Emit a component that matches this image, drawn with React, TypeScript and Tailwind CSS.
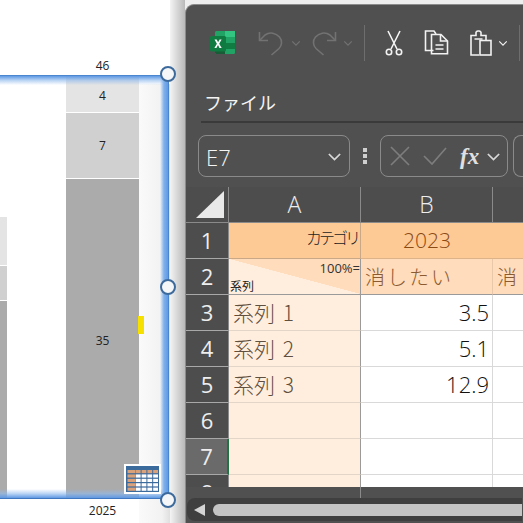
const jp = "font-['Noto_Sans_CJK_JP','Noto_Sans',sans-serif]";
const ui = "font-['Open_Sans','Noto_Sans_CJK_JP',sans-serif]";

const Chevron = ({ color = "#d8d8d8", w = 12 }: { color?: string; w?: number }) => (
  <svg width={w} height={w} viewBox="0 0 12 12" fill="none" stroke={color} strokeWidth="1.4">
    <path d="M1.5 4 6 8.5 10.5 4" />
  </svg>
);

const ExcelLogo = () => (
  <svg width="25" height="25" viewBox="0 0 25 25" className="shrink-0">
    <rect x="5" y="1" width="20" height="23" rx="1.5" fill="#21a366" />
    <rect x="15" y="1" width="10" height="6" fill="#33c481" />
    <rect x="15" y="7" width="10" height="6" fill="#21a366" />
    <rect x="15" y="13" width="10" height="6" fill="#107c41" />
    <path d="M5 13h10v11H6.500A1.500 1.500 0 0 1 5 22.500z" fill="#185c37" />
    <rect x="0" y="6" width="16" height="15.500" rx="1.500" fill="#0f7b41" />
    <path d="M4.500 9.500h2.200l1.400 2.700 1.500-2.700h2l-2.400 4.200 2.500 4.300h-2.200l-1.500-2.900-1.600 2.900h-2l2.500-4.300z" fill="#fff" />
  </svg>
);

const Undo = ({ flip }: { flip?: boolean }) => (
  <svg width="25" height="26" viewBox="0 0 25 26" fill="none" stroke="#727272" strokeWidth="1.6" className={flip ? "-scale-x-100" : ""}>
    <path d="M1.500 2v8.500H10" />
    <path d="M1.500 10.500 7 5c5-3.500 11-2 14.500 2 3 3.500 2.500 8.500-.5 11.500L13.500 25" />
  </svg>
);

const Scissors = () => (
  <svg width="18" height="26" viewBox="0 0 18 26" fill="none" stroke="#f2f2f2" strokeWidth="1.6">
    <path d="M3 1 12 19M15 1 6 19" />
    <circle cx="4" cy="22" r="2.700" />
    <circle cx="14" cy="22" r="2.700" />
  </svg>
);

const Copy = () => (
  <svg width="25" height="25" viewBox="0 0 25 25" fill="none" stroke="#f2f2f2" strokeWidth="1.6">
    <path d="M9.500 20.500H1.500V1h8.500l2 3" />
    <path d="M7.500 4.500h9.500l6.500 6.500v12.800h-16z" />
    <path d="M16.500 5v6h7M11.500 15h8M11.500 19h8" />
  </svg>
);

const Paste = () => (
  <svg width="22" height="26" viewBox="0 0 22 26" fill="none" stroke="#f2f2f2" strokeWidth="1.600">
    <path d="M9 25H1V5.500h5V3.500A2 2 0 0 1 8 1h1a2 2 0 0 1 2 2.500v2h5V10" />
    <rect x="10" y="10.500" width="11" height="14.500" />
    <path d="M4.500 9h8" />
  </svg>
);

const TableBadge = () => (
  <svg width="37" height="30" viewBox="0 0 37 30">
    <rect width="37" height="30" fill="#fff" />
    <rect x="2" y="2" width="33" height="26" fill="#3b6a9c" />
    {[0, 1, 2, 3, 4].map((c) =>
      [0, 1, 2, 3, 4].map((r) => (
        <rect
          key={`${c}-${r}`}
          x={c === 0 ? 3.500 : 6 + c * 5.800}
          y={6 + r * 4.400}
          width={c === 0 ? 8 : 4.800}
          height="3.200"
          fill={r === 0 || c === 0 ? "#d9a27a" : "#ffffff"}
        />
      )),
    )}
  </svg>
);

const Handle = ({ y }: { y: number }) => (
  <div
    className="absolute left-[160px] size-4 rounded-full border-2 border-[#3d6a9c] bg-[#f4f6f8]"
    style={{ top: y - 8 }}
  />
);

const Chart = () => (
  <div className="relative w-[185px] h-full shrink-0 overflow-hidden bg-white">
    {/* window shadow on the right */}
    <div className="absolute left-[139px] top-[84px] bottom-0 w-[46px] bg-gradient-to-r from-[#fafafa] via-[#f2f2f2] to-[#bdbdbd]" />
    <div className="absolute left-[170px] top-0 bottom-0 w-[15px] bg-gradient-to-r from-[#f4f4f4] to-[#b9b9b9]" />

    {/* left bar, cut by the edge */}
    <div className="absolute left-0 top-[217px] bottom-[25px] w-[7px] flex flex-col gap-px">
      <div className="h-[48px] bg-[#e4e4e4]" />
      <div className="h-[34px] bg-[#d0d0d0]" />
      <div className="flex-1 bg-[#ababab]" />
    </div>

    {/* 2025 bar */}
    <div className={`absolute left-[66px] top-[76px] bottom-[25px] w-[73px] flex flex-col gap-px text-[12px] text-[#222] ${ui}`}>
      <div className="h-[36px] pt-[3px] flex items-center justify-center bg-[#e4e4e4]">4</div>
      <div className="h-[65px] flex items-center justify-center bg-[#d0d0d0]">7</div>
      <div className="flex-1 pt-[5px] flex items-center justify-center bg-[#ababab]">35</div>
    </div>
    <div className={`absolute left-[66px] top-[58px] w-[73px] text-center text-[12px] leading-[15px] text-[#222] ${ui}`}>46</div>
    <div className={`absolute left-[66px] top-[503px] w-[73px] text-center text-[12px] leading-[15px] text-[#222] ${ui}`}>2025</div>

    {/* selection frame */}
    <div className="absolute left-0 top-[75px] w-[168px] h-[10px] border-t border-[#4a85d0] bg-gradient-to-b from-[#5f9ae4] via-[#8fb9ee99] to-[#639ce200]" />
    <div className="absolute left-0 top-[489px] w-[168px] h-[10px] border-b border-[#3f78c0] bg-gradient-to-t from-[#5f9ae4] via-[#8fb9ee99] to-[#639ce200]" />
    <div className="absolute left-[160px] top-[75px] w-[9px] h-[424px] border-r border-[#4a85d0] bg-gradient-to-r from-[#639ce200] via-[#7fb0ec] to-[#5f9ae4]" />

    <Handle y={74} />
    <Handle y={287} />
    <Handle y={500} />

    <div className="absolute left-[138px] top-[316px] w-[6px] h-[18px] bg-[#f6e000]" />
    <div className="absolute left-[124px] top-[464px]">
      <TableBadge />
    </div>
  </div>
);

const rowNums = [1, 2, 3, 4, 5, 6, 7, 8];

const Cell = ({ className = "", children }: { className?: string; children?: React.ReactNode }) => (
  <div className={`h-[36px] min-w-0 overflow-hidden whitespace-nowrap ${className}`}>{children}</div>
);

const peach = "bg-[#ffeedd] border-b border-[#e3d6c8] border-r border-r-[#9a9a9a]";
const white = "bg-white border-b border-r border-[#d9d9d9]";
const label = `flex items-center pl-[4px] text-[21px] [word-spacing:3px] text-[#5f4f3e] font-light ${jp}`;
const num = `flex items-center justify-end pr-[3px] text-[22px] text-[#111] font-light ${ui}`;

const Sheet = () => (
  <div className={`relative h-[300px] shrink-0 overflow-hidden grid grid-cols-[43px_132px_132px_1fr] auto-rows-[36px] content-start bg-[#4d4d4d] ${ui}`}>
    {/* header row */}
    <div className="h-[36px] flex items-end justify-end pr-[4px] pb-[4px] border-r border-b border-[#8a8a8a]">
      <svg width="28" height="27" viewBox="0 0 28 27">
        <path d="M0 27 28 0v27z" fill="#e9e9e9" />
      </svg>
    </div>
    <div className="h-[36px] pb-px flex items-center justify-center text-[23px] font-light text-[#eee] border-r border-b border-[#8a8a8a]">A</div>
    <div className="h-[36px] pb-px flex items-center justify-center text-[23px] font-light text-[#eee] border-r border-b border-[#8a8a8a]">B</div>
    <div className="h-[36px] border-b border-[#8a8a8a]" />

    {rowNums.map((n) => {
      const rowHead = (
        <div
          key={`h${n}`}
          className={`h-[36px] flex items-center justify-center text-[22px] text-[#eee] border-b border-[#a8a8a8] ${
            n === 7 ? "bg-[#6a6a6a] border-r-2 border-r-[#217346]" : "bg-[#4d4d4d] border-r border-r-[#8a8a8a]"
          }`}
        >
          {n}
        </div>
      );
      if (n === 1)
        return [
          rowHead,
          <Cell key="a1" className={`flex items-center justify-end pb-[8px] pr-[2px] text-[16px] font-light tracking-[-3px] text-[#222] bg-[#fdc995] border-b border-r border-[#c9a888] ${jp}`}>
            カテゴリ
          </Cell>,
          <Cell key="b1" className={`flex items-center justify-center text-[21px] font-light text-[#8a4a14] bg-[#fdc995] border-b border-[#ddb48a] ${ui}`}>
            2023
          </Cell>,
          <Cell key="c1" className="bg-[#fdc995] border-b border-[#ddb48a]" />,
        ];
      if (n === 2)
        return [
          rowHead,
          <Cell key="a2" className={`relative bg-[linear-gradient(to_top_right,#ffeedd_50%,#fedcbc_50.500%)] border-b border-r border-b-[#9a9a9a] border-r-[#9a9a9a] ${jp}`}>
            <span className={`absolute right-0 top-[1px] text-[13px] leading-[16px] text-[#333] ${ui}`}>100%=</span>
            <span className="absolute left-px bottom-0 text-[12px] leading-[17px] text-[#222]">系列</span>
          </Cell>,
          <Cell key="b2" className={`flex items-center pl-[4px] text-[20px] font-light tracking-[2px] text-[#8a5a30] bg-[#fedcbc] border-b border-b-[#9a9a9a] border-r border-r-[#e8c8a8] ${jp}`}>
            消したい
          </Cell>,
          <Cell key="c2" className={`flex items-center pl-[4px] text-[20px] font-light text-[#8a5a30] bg-[#fedcbc] border-b border-b-[#9a9a9a] ${jp}`}>
            消
          </Cell>,
        ];
      const vals: Record<number, [string, string]> = {
        3: ["系列 1", "3.5"],
        4: ["系列 2", "5.1"],
        5: ["系列 3", "12.9"],
      };
      const v = vals[n];
      return [
        rowHead,
        <Cell key={`a${n}`} className={`${peach} ${label}`}>
          {v?.[0]}
        </Cell>,
        <Cell key={`b${n}`} className={`${white} ${num}`}>
          {v?.[1]}
        </Cell>,
        <Cell key={`c${n}`} className="bg-white border-b border-[#d9d9d9]" />,
      ];
    })}
  </div>
);

const ExcelWindow = () => (
  <div className="mt-[4px] flex-1 min-w-0 h-[519px] flex flex-col overflow-hidden rounded-tl-[9px] border-t border-l border-[#8c8c8c] bg-[#505050]">
    {/* title bar */}
    <div className="h-[75px] shrink-0 flex items-center pl-[24px]">
      <ExcelLogo />
      <div className="ml-[23px]"><Undo /></div>
      <div className="ml-[8px]"><Chevron color="#727272" w={10} /></div>
      <div className="ml-[11px]"><Undo flip /></div>
      <div className="ml-[6px]"><Chevron color="#727272" w={10} /></div>
      <div className="ml-[11px] h-[36px] w-px bg-[#6e6e6e]" />
      <div className="ml-[20px]"><Scissors /></div>
      <div className="ml-[21px]"><Copy /></div>
      <div className="ml-[21px]"><Paste /></div>
      <div className="ml-[6px]"><Chevron color="#f2f2f2" w={10} /></div>
      <div className="ml-[11px] h-[36px] w-px bg-[#6e6e6e]" />
    </div>

    {/* ribbon tab */}
    <div className={`h-[41px] shrink-0 pl-[18px] pt-[9px] text-[18px] leading-[26px] text-[#f4f4f4] ${jp}`}>
      ファイル
    </div>
    <div className="h-[2px] shrink-0 ml-[15px] bg-[#3a3a3a]" />

    {/* formula bar */}
    <div className="mt-[12px] h-[42px] shrink-0 flex items-stretch pl-[12px]">
      <div className={`w-[152px] shrink-0 flex items-center justify-between pl-[7px] pr-[7px] rounded-[8px] border border-[#8a8a8a] text-[22px] font-light text-[#f4f4f4] ${ui}`}>
        <span className="pt-[2px]">E7</span>
        <Chevron w={15} />
      </div>
      <div className="w-[30px] shrink-0 flex flex-col items-center justify-center gap-[2px]">
        <span className="size-[4px] bg-[#cfcfcf]" />
        <span className="size-[4px] bg-[#cfcfcf]" />
        <span className="size-[4px] bg-[#cfcfcf]" />
      </div>
      <div className="w-[128px] shrink-0 flex items-center pl-[9px] rounded-[8px] border border-[#8a8a8a]">
        <svg width="20" height="20" viewBox="0 0 20 20" fill="none" stroke="#7d7d7d" strokeWidth="1.700">
          <path d="M1 1 19 19M19 1 1 19" />
        </svg>
        <svg width="24" height="18" viewBox="0 0 24 18" fill="none" stroke="#7d7d7d" strokeWidth="1.700" className="ml-[13px]">
          <path d="M1 9 9 17 23 1" />
        </svg>
        <span className="ml-[13px] w-[22px] font-['Liberation_Serif',serif] italic font-bold text-[23px] leading-none text-[#e0e0e0]">fx</span>
        <div className="ml-[4px]"><Chevron w={15} /></div>
      </div>
      <div className="ml-[5px] flex-1 rounded-l-[8px] border border-r-0 border-[#8a8a8a]" />
    </div>

    <div className="h-[10px] shrink-0" />

    <Sheet />

    {/* sheet tabs strip and scroll bar */}
    <div className="h-[11px] shrink-0 bg-[#505050] ml-[174px] border-l border-[#8a8a8a]" />
    <div className="relative h-[23px] shrink-0 mx-px flex items-center pl-[7px] rounded-l-[8px] bg-[#3f3f3f]">
      <svg width="11" height="12" viewBox="0 0 11 12" className="shrink-0">
        <path d="M0 6 11 0v12z" fill="#d4d4d4" />
      </svg>
      <div className="ml-[8px] flex-1 h-[12px] rounded-l-full bg-[#c4c4c4]" />
    </div>
    <div className="flex-1 bg-[#505050]" />
  </div>
);

export default function App() {
  return (
    <div className="flex w-[523px] h-[523px] overflow-hidden bg-[#eeeeee]">
      <Chart />
      <ExcelWindow />
    </div>
  );
}
